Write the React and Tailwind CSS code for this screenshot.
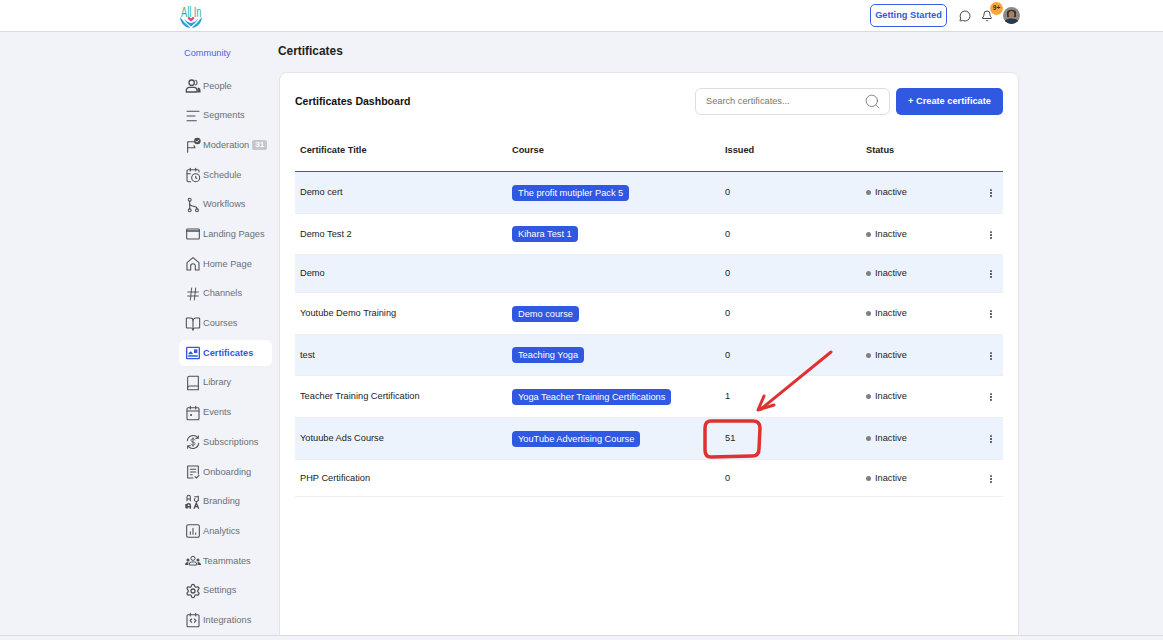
import {
  AlignLeft,
  Bell,
  BookOpen,
  CalendarClock,
  EllipsisVertical,
  Hash,
  MessageCircle,
  Search,
  Settings,
} from "lucide-react";

const stroke = { fill: "none", stroke: "currentColor", strokeWidth: 1.6, strokeLinecap: "round", strokeLinejoin: "round" };

function Ico({ children }) {
  return (
    <svg viewBox="0 0 24 24" className="w-[16px] h-[16px]" {...stroke}>
      {children}
    </svg>
  );
}

const icons = {
  People: (
    <Ico>
      <circle cx="10" cy="7" r="4" strokeWidth="2" />
      <path d="M2 21v-2.500a4.500 4.500 0 0 1 4.500-4.500h7a4.500 4.500 0 0 1 4.500 4.500V21z" strokeWidth="2" />
      <path d="M16 3.500a4 4 0 0 1 0 7" />
      <path d="M20 15c1.500.5 2.500 2 2.500 3.500V21h-3z" fill="currentColor" />
    </Ico>
  ),
  Segments: <AlignLeft className="w-[16px] h-[16px]" strokeWidth={1.6} />,
  Moderation: (
    <Ico>
      <path d="M4 23V7h9" />
      <path d="M4 16h11l-1.500-3" />
      <circle cx="18.500" cy="6" r="5" fill="currentColor" stroke="none" />
      <path d="M16.200 6l1.700 1.700L21 4.600" stroke="#f1f3f8" strokeWidth="1.300" />
    </Ico>
  ),
  Schedule: <CalendarClock className="w-[16px] h-[16px]" strokeWidth={1.6} />,
  Workflows: (
    <Ico>
      <circle cx="7" cy="4" r="2.200" />
      <circle cx="7" cy="20" r="2.200" />
      <circle cx="18" cy="20" r="2.200" />
      <path d="M7 6.500V17.500" />
      <path d="M7 10c0 3 3 3.500 6 4s5 2 5 3.500" />
    </Ico>
  ),
  "Landing Pages": (
    <Ico>
      <rect x="2.500" y="4.500" width="19" height="15" rx="1.200" />
      <path d="M2.500 7.500h19" strokeWidth="2.200" />
    </Ico>
  ),
  "Home Page": (
    <Ico>
      <path d="M3 21V10l9-7.500L21 10v11h-5.500v-6a3.500 3.500 0 0 0-7 0v6z" />
    </Ico>
  ),
  Channels: <Hash className="w-[16px] h-[16px]" strokeWidth={1.4} />,
  Courses: <BookOpen className="w-[16px] h-[16px]" strokeWidth={1.6} />,
  Certificates: (
    <Ico>
      <rect x="2.500" y="3.500" width="19" height="17" rx="1" strokeWidth="2" />
      <path d="M5.500 16.500h13" strokeWidth="2" />
      <path d="M6 13l2.500-2.500L11 13z" fill="currentColor" />
      <rect x="13.500" y="6.500" width="5" height="5.500" fill="currentColor" stroke="none" />
    </Ico>
  ),
  Library: (
    <Ico>
      <path d="M4 22V4.500A2.500 2.500 0 0 1 6.500 2H20v20z" />
      <path d="M4 19a2.500 2.500 0 0 1 2.500-2.500H20" />
    </Ico>
  ),
  Events: (
    <Ico>
      <rect x="3" y="4" width="18" height="18" rx="1.500" />
      <path d="M3 9h18M8 2v4M16 2v4" />
      <circle cx="9" cy="15" r="1.600" fill="currentColor" stroke="none" />
    </Ico>
  ),
  Subscriptions: (
    <Ico>
      <path d="M3.500 10a8.800 8.800 0 0 1 15.500-4.500" />
      <path d="M20.500 14a8.800 8.800 0 0 1-15.500 4.500" />
      <path d="M20 2.500V6.500h-4M4 21.500v-4h4" />
      <path d="M15 9c-.5-1.200-1.500-1.800-3-1.800-1.700 0-3 .9-3 2.300 0 3.200 6 1.800 6 5 0 1.400-1.300 2.300-3 2.300-1.500 0-2.600-.7-3-1.800M12 5.500v13" strokeWidth="1.300" />
    </Ico>
  ),
  Onboarding: (
    <Ico>
      <path d="M12 21H4V3h16v12" />
      <path d="M8 8h8M8 12h8M8 16h3" />
      <path d="M15 19l2 2 4-4" />
    </Ico>
  ),
  Branding: (
    <svg viewBox="0 0 24 24" className="w-[16px] h-[16px]" fill="none" stroke="currentColor" strokeWidth="1.600">
      <path d="M3 11V4.500a2.500 2.500 0 0 1 5 0V11M3 7.500h5" />
      <path d="M14 4h6M20 2.500V11M15.500 6.500a3 2.500 0 1 0 4.500 2" />
      <path d="M3 22v-5a2.500 2.500 0 0 1 5 0v5M3 19h5M1.500 15v6" strokeWidth="2.200" />
      <path d="M13.500 22l3.500-8.500 3.500 8.500M15 19h4" strokeWidth="2" />
    </svg>
  ),
  Analytics: (
    <Ico>
      <rect x="2.500" y="2.500" width="19" height="19" rx="2.500" />
      <path d="M8 17v-4M12 17V8M16 17v-2" />
    </Ico>
  ),
  Teammates: (
    <svg viewBox="0 0 24 24" className="w-[18px] h-[18px]" fill="currentColor">
      <circle cx="12" cy="8" r="3.100" fill="none" stroke="currentColor" strokeWidth="1.500" />
      <path d="M6.500 18v-1.500a3 3 0 0 1 3-3h5a3 3 0 0 1 3 3V18z" fill="none" stroke="currentColor" strokeWidth="1.500" />
      <circle cx="4.500" cy="10.500" r="2.300" />
      <circle cx="19.500" cy="10.500" r="2.300" />
      <path d="M0 18c0-3 2-4.500 5-4.500v4.500zM24 18c0-3-2-4.500-5-4.500v4.500z" />
    </svg>
  ),
  Settings: <Settings className="w-[16px] h-[16px]" strokeWidth={1.9} />,
  Integrations: (
    <Ico>
      <rect x="3" y="4" width="18" height="18" rx="1.500" />
      <path d="M8 2v4M16 2v4" />
      <path d="M10 10.500L7.500 13l2.500 2.500M14 10.500l2.500 2.500-2.500 2.500" />
    </Ico>
  ),
};

const navItems = [
  "People",
  "Segments",
  "Moderation",
  "Schedule",
  "Workflows",
  "Landing Pages",
  "Home Page",
  "Channels",
  "Courses",
  "Certificates",
  "Library",
  "Events",
  "Subscriptions",
  "Onboarding",
  "Branding",
  "Analytics",
  "Teammates",
  "Settings",
  "Integrations",
];

const rows = [
  { title: "Demo cert", course: "The profit mutipler Pack 5", issued: 0, h: "h-[42px]" },
  { title: "Demo Test 2", course: "Kihara Test 1", issued: 0, h: "h-[41px]" },
  { title: "Demo", issued: 0, h: "h-[38px]" },
  { title: "Youtube Demo Training", course: "Demo course", issued: 0, h: "h-[42px]" },
  { title: "test", course: "Teaching Yoga", issued: 0, h: "h-[41px]" },
  { title: "Teacher Training Certification", course: "Yoga Teacher Training Certifications", issued: 1, h: "h-[42px]" },
  { title: "Yotuube Ads Course", course: "YouTube Advertising Course", issued: 51, h: "h-[42px]" },
  { title: "PHP Certification", issued: 0, h: "h-[37px]" },
];

function Logo() {
  return (
    <svg viewBox="0 0 24 26" className="w-[24px] h-[26px]">
      <text x="3" y="14" fontSize="14" fontFamily="Liberation Sans, sans-serif" fill="#2bb3a3" transform="scale(.66 1)">
        All In
      </text>
      <path d="M1 14c.5 5.500 4 10 10 11-1.500-3-5-4-7-7.500z" fill="#2a9fd6" />
      <path d="M23 14c-.5 5.500-4 10-10 11 1.500-3 5-4 7-7.500z" fill="#2a9fd6" />
      <path d="M5 16c1.500 3 4 5 7 7.500 3-2.500 5.500-4.500 7-7.500-2.500 2.500-4.500 3.500-7 4-2.500-.5-4.500-1.500-7-4z" fill="#2a9fd6" />
      <path d="M12 18.500l-3-2.600c-1-1.200.8-2.500 1.800-1.500l1.200 1 1.200-1c1-1 2.800.3 1.800 1.500z" fill="#e8407f" />
    </svg>
  );
}

function Avatar() {
  return (
    <svg viewBox="0 0 17 17" className="ml-[10px] w-[17px] h-[17px] rounded-full">
      <rect width="17" height="17" fill="#8b8a86" />
      <path d="M4 5c1-3 8-3 9 0v5H4z" fill="#3d3026" />
      <ellipse cx="8.500" cy="7.500" rx="2.800" ry="3.500" fill="#a97f62" />
      <path d="M1 17c0-4 3-5.500 7.500-5.500S16 13 16 17z" fill="#26384a" />
    </svg>
  );
}

export default function App() {
  return (
    <div className="h-[640px] w-[1163px] overflow-hidden bg-[#f1f3f8] font-['Liberation_Sans',sans-serif] relative">
      {/* Top bar */}
      <header className="h-[32px] bg-white border-b border-[#d9dbe0] flex items-center pl-[179px] pr-[143px]">
        <Logo />
        <div className="ml-auto flex items-center">
          <button className="h-[23px] w-[77px] rounded-[5px] border border-[#3b5de7] text-[#3158e0] text-[9.240px] font-bold flex items-center justify-center">
            Getting Started
          </button>
          <MessageCircle className="w-[12px] h-[12px] ml-[12px] text-[#333]" strokeWidth={1.8} />
          <div className="relative ml-[10px]">
            <Bell className="w-[12px] h-[12px] text-[#333]" strokeWidth={1.8} />
            <span className="absolute -top-[8px] left-[9px] w-[13px] h-[13px] rounded-full bg-[#f5a93b] text-[6.500px] font-bold text-[#333] flex items-center justify-center">
              9+
            </span>
          </div>
          <Avatar />
        </div>
      </header>

      <div className="flex pl-[179px]">
        {/* Sidebar */}
        <aside className="w-[93px] shrink-0">
          <div className="h-[41px] pl-[5px] pt-[2px] flex items-center text-[9.240px] text-[#4a66e8]">Community</div>
          <nav className="flex flex-col gap-[3.700px]">
            {navItems.map((name) => {
              const active = name === "Certificates";
              return (
                <div
                  key={name}
                  className={`h-[26px] flex items-center gap-[2px] pl-[6px] rounded-[6px] text-[9.240px] ${
                    active ? "bg-white text-[#3158e0] font-bold" : "text-[#6b6f76]"
                  }`}
                >
                  <span className={`w-[16px] flex justify-center ${active ? "text-[#3158e0]" : "text-[#4b4f55]"}`}>{icons[name]}</span>
                  <span className="pt-[1px]">{name}</span>
                  {name === "Moderation" && (
                    <span className="ml-[1px] px-[3px] h-[10px] rounded-[2px] bg-[#c4c7cc] text-white text-[8px] font-bold flex items-center">
                      31
                    </span>
                  )}
                </div>
              );
            })}
          </nav>
        </aside>

        {/* Main */}
        <main className="ml-[7px] w-[740px]">
          <h1 className="h-[40px] pb-[1px] -ml-[1px] flex items-center text-[11.900px] font-bold text-[#222]">Certificates</h1>
          <section className="h-[564px] bg-white border border-[#e3e5ea] rounded-t-[8px] px-[15px]">
            <div className="h-[56px] flex items-center justify-between">
              <h2 className="pt-[2px] text-[10.560px] font-bold text-[#111]">Certificates Dashboard</h2>
              <div className="flex items-center gap-[6px]">
                <div className="w-[195px] h-[27px] rounded-[6px] border border-[#dcdee3] flex items-center pl-[10px] pr-[8px] text-[9.240px] text-[#777]">
                  <span className="pt-[1px]">Search certificates...</span>
                  <Search className="ml-auto w-[17px] h-[17px] text-[#666]" strokeWidth={1.1} />
                </div>
                <button className="w-[107px] h-[27px] pt-[1px] rounded-[5px] bg-[#3158e0] text-white text-[9.240px] font-bold">
                  + Create certificate
                </button>
              </div>
            </div>

            {/* Table */}
            <div className="grid grid-cols-[212px_213px_141px_1fr] h-[43px] pt-[2px] items-center pl-[5px] border-b border-[#555a60] text-[9.240px] font-bold text-[#222]">
              <span>Certificate Title</span>
              <span>Course</span>
              <span>Issued</span>
              <span>Status</span>
            </div>
            {rows.map((r, i) => (
              <div
                key={r.title}
                className={`grid grid-cols-[212px_213px_141px_1fr] ${r.h} items-center pl-[5px] border-b border-[#eceef2] text-[9.240px] text-[#222] ${
                  i % 2 === 0 ? "bg-[#edf3fd]" : "bg-white"
                }`}
              >
                <span className="pt-[1px]">{r.title}</span>
                <span>
                  {r.course && (
                    <span className="inline-block bg-[#3158e0] text-white rounded-[4px] px-[6px] py-[2px] leading-[12px]">
                      {r.course}
                    </span>
                  )}
                </span>
                <span className="pt-[1px]">{r.issued}</span>
                <span className="flex items-center">
                  <span className="w-[5px] h-[5px] rounded-full bg-[#808080] mr-[4px]" />
                  <span className="pt-[1px]">Inactive</span>
                  <EllipsisVertical className="ml-auto mt-[1px] mr-[7px] w-[10px] h-[10px] text-[#222]" strokeWidth={2.5} />
                </span>
              </div>
            ))}
          </section>
        </main>
      </div>
      <div className="h-[5px] bg-[#f1f3f8] border-t border-[#d9dbe0] absolute bottom-0 left-0 right-0" />

      {/* Red annotation over the table */}
      <svg className="absolute left-0 top-0 pointer-events-none" width="1163" height="640" fill="none" stroke="#e03131" strokeLinecap="round" strokeLinejoin="round">
        <path d="M831 352L761 409" strokeWidth="3" />
        <path d="M774 405L758 410L764 396" strokeWidth="3" />
        <path d="M711 421H753Q760 421 760 428L759 449Q759 456 752 456L711 457Q705 457 705 450L705 428Q705 421 711 421Z" strokeWidth="3.500" />
      </svg>
    </div>
  );
}
